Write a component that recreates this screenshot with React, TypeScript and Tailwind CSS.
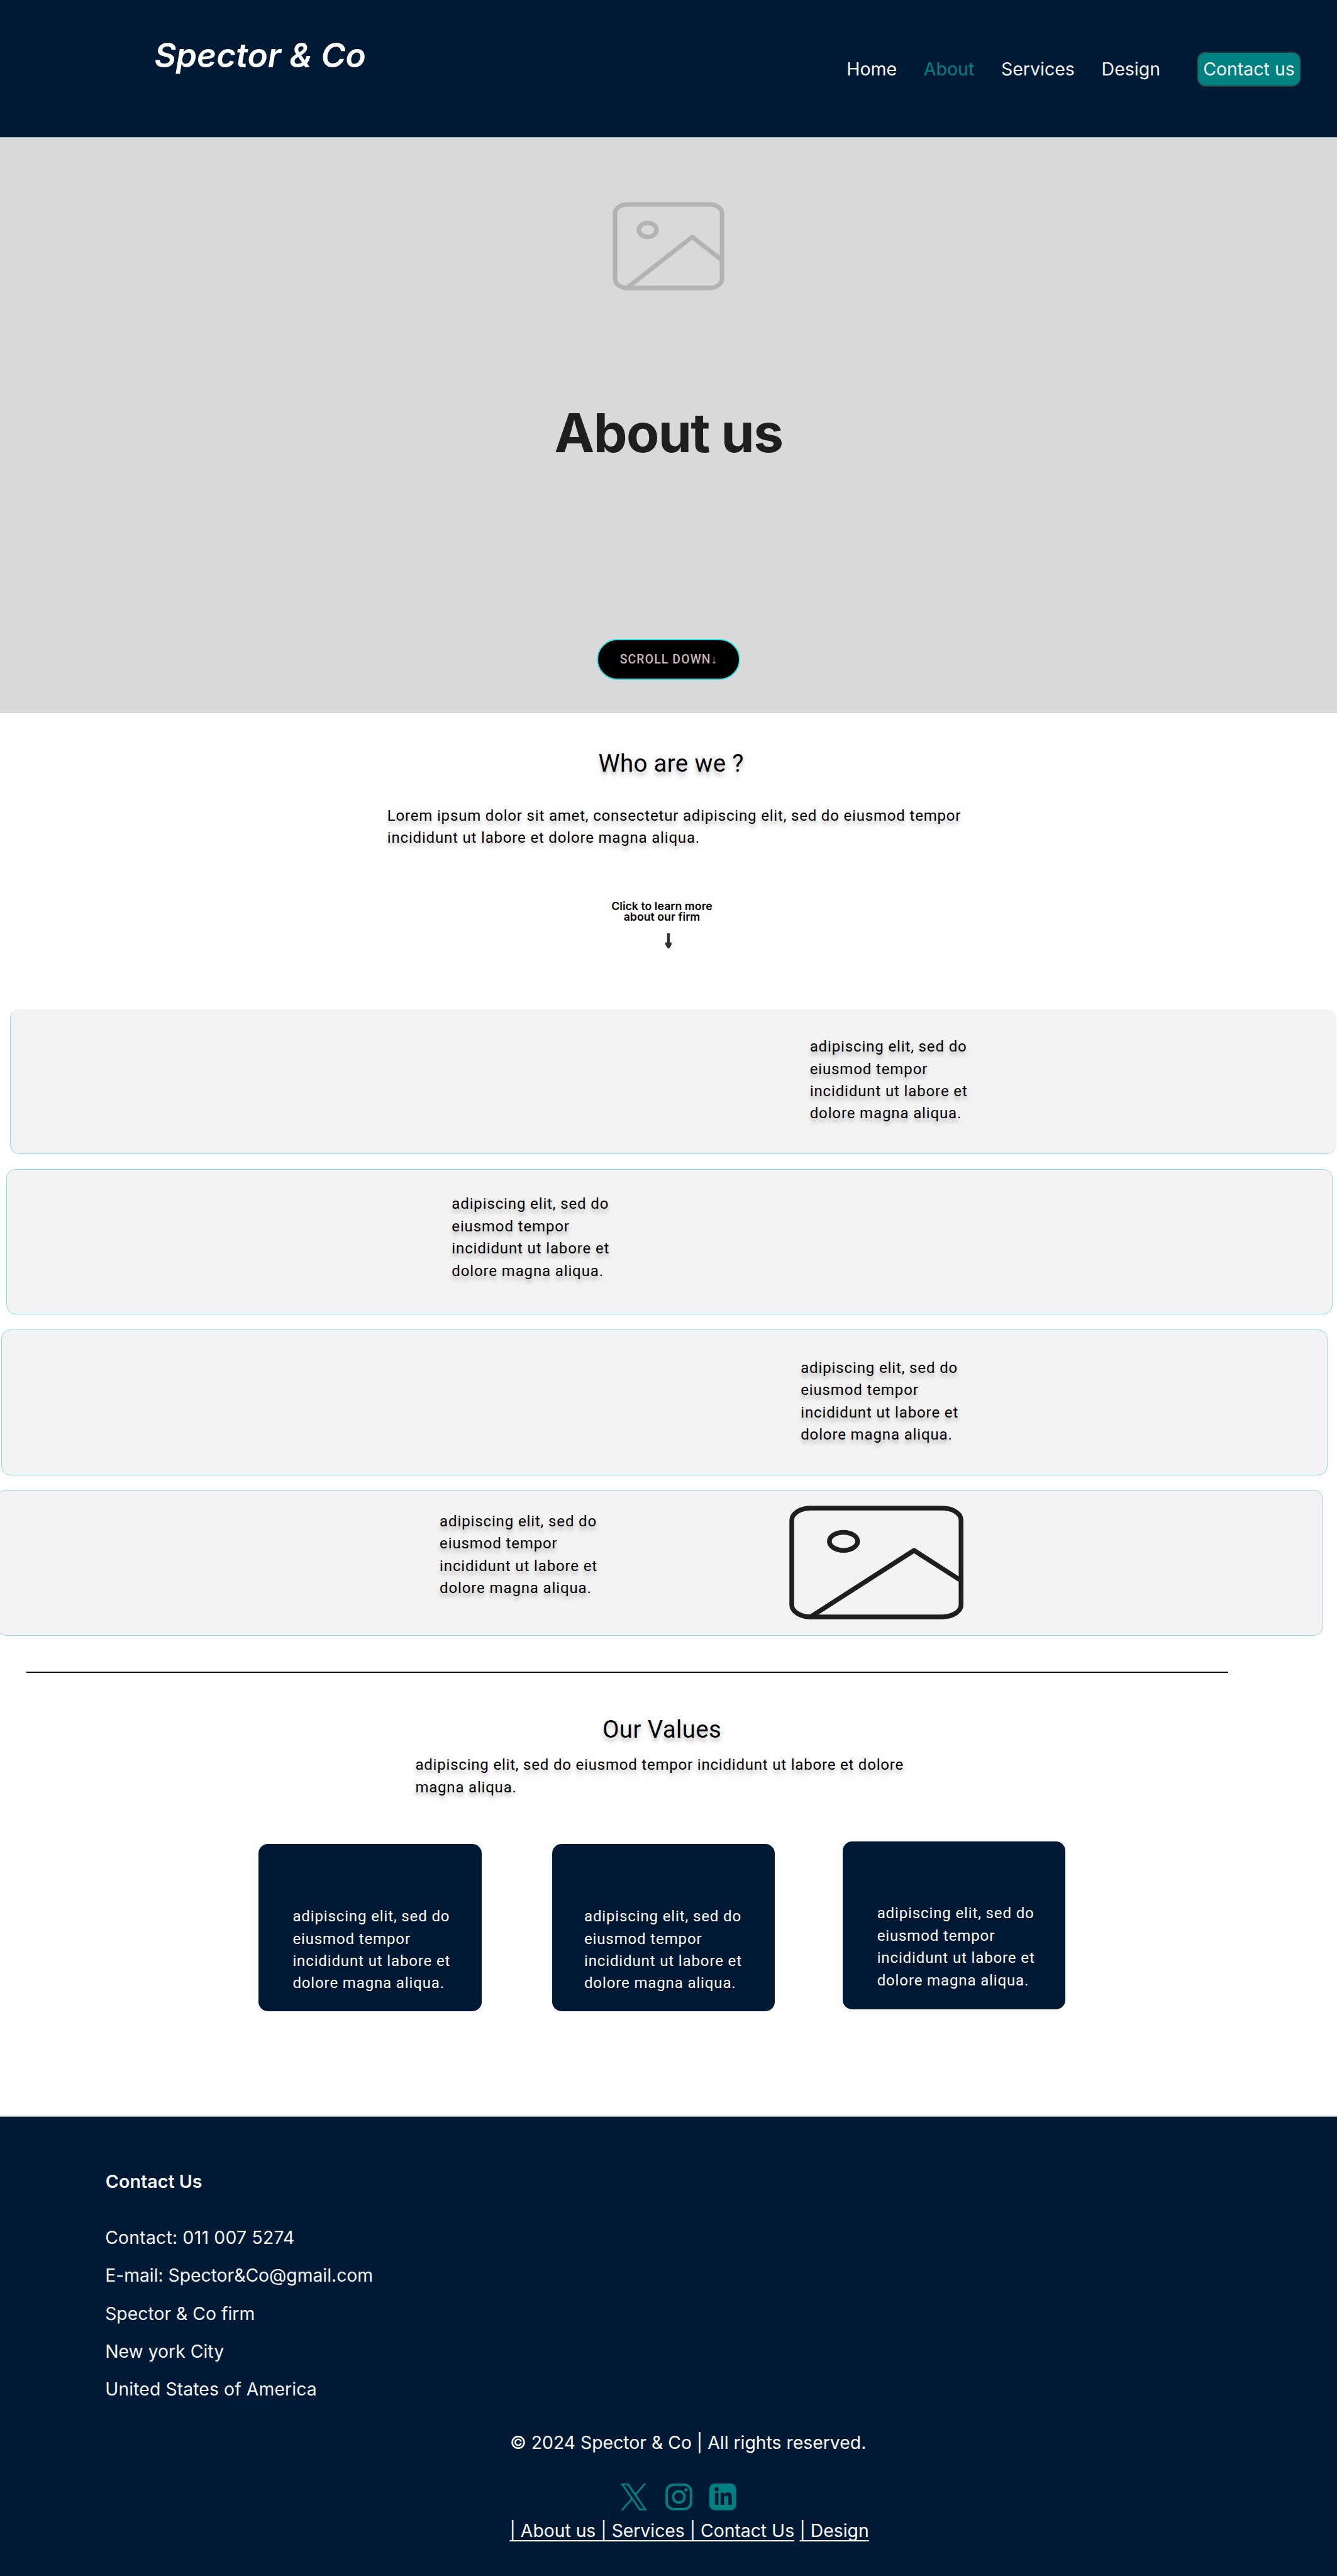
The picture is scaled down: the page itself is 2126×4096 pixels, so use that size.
import type { ReactNode } from "react";

function PictureIcon({ className, strokeWidth }: { className: string; strokeWidth: number }) {
  return (
    <svg
      className={className}
      viewBox="0 0 18 18"
      preserveAspectRatio="none"
      overflow="visible"
      fill="none"
      stroke="currentColor"
      strokeWidth={strokeWidth}
      strokeLinecap="round"
      strokeLinejoin="round"
    >
      <rect x="0" y="0" width="18" height="18" rx="2" ry="2" vectorEffect="non-scaling-stroke" />
      <circle cx="5.5" cy="5.5" r="1.5" vectorEffect="non-scaling-stroke" />
      <polyline points="18 12 13 7 2 18" vectorEffect="non-scaling-stroke" />
    </svg>
  );
}

function Blurb({ className = "" }: { className?: string }) {
  return (
    <p
      className={`shrink-0 whitespace-nowrap font-['Roboto',sans-serif] text-[24px] leading-[35.4px] tracking-[0.87px] [text-shadow:0_6px_6px_rgba(0,0,0,0.25)] ${className}`}
    >
      adipiscing elit, sed do
      <br />
      eiusmod tempor
      <br />
      incididunt ut labore et
      <br />
      dolore magna aliqua.
    </p>
  );
}

function Panel({ className, children }: { className: string; children: ReactNode }) {
  return (
    <div
      className={`flex w-[2109px] shrink-0 items-start rounded-[15px] border-[#8fdadc] bg-[#f3f3f3] text-black ${className}`}
    >
      {children}
    </div>
  );
}

function ValueCard({ className, children }: { className: string; children: ReactNode }) {
  return (
    <div className={`h-[266.2px] w-[354.4px] shrink-0 rounded-[15px] bg-[#001a36] text-white ${className}`}>
      {children}
    </div>
  );
}

function XLogo() {
  return (
    <svg className="h-[42.5px] w-[42px]" viewBox="1 1 22 22" preserveAspectRatio="none" fill="currentColor">
      <path d="M14.095479,10.316482L22.286354,1h-1.940718l-7.115352,8.087682L7.551414,1H1l8.589488,12.231093L1,23h1.940717l7.509372-8.542861L16.448587,23H23L14.095479,10.316482z M11.436522,13.338465l-0.871624-1.218704l-6.924311-9.68815h2.981339l5.58978,7.82155l0.867949,1.218704l7.26506,10.166271h-2.981339L11.436522,13.338465z" />
    </svg>
  );
}

function InstagramLogo() {
  return (
    <svg className="ml-[28.7px] h-[42.5px] w-[42.9px]" viewBox="0 0 50 50" fill="none" stroke="currentColor" strokeWidth="4.5">
      <rect x="2.25" y="2.25" width="45.5" height="45.5" rx="12.5" />
      <circle cx="25" cy="25" r="10.6" />
      <circle cx="38.3" cy="11.7" r="3" fill="currentColor" stroke="none" />
    </svg>
  );
}

function LinkedInLogo() {
  return (
    <svg className="ml-[27.7px] h-[42.5px] w-[42.5px]" viewBox="0 0 50 50">
      <rect width="50" height="50" rx="10" fill="currentColor" />
      <g fill="#001a36">
        <circle cx="13.6" cy="10.7" r="3.9" />
        <path d="M10.3 17.3h6.6v22.7h-6.6z" />
        <path d="M21 17.3h6.3v3.1c1.1-2 3.5-3.8 6.9-3.8 6.4 0 7.8 4.1 7.8 9.6V40h-6.6V27.9c0-2.7-.5-5.4-3.9-5.4-3.5 0-4 2.7-4 5.3V40H21z" />
      </g>
    </svg>
  );
}

export default function App() {
  return (
    <div className="flex h-[4096px] w-[2126px] flex-col overflow-hidden bg-[#fefefe] font-['Inter',sans-serif]">
      <header className="flex h-[217.7px] shrink-0 items-start justify-between bg-[#001a36] pr-[57px] pl-[245.4px] text-[#f5f5f5]">
        <div className="mt-[56.4px] text-[53.15px] leading-[64px] font-semibold text-white italic">Spector &amp; Co</div>
        <nav className="mt-[81.7px] flex h-[56.7px] items-center gap-[42.7px] text-[28.5px] leading-[40px]">
          <a className="text-white">Home</a>
          <a className="text-[#008080]">About</a>
          <a>Services</a>
          <a>Design</a>
          <a className="ml-[15.3px] flex h-[56.7px] w-[166px] items-center justify-center rounded-[14px] border-2 border-[#2c3a3a] bg-[#008080]">
            Contact us
          </a>
        </nav>
      </header>

      <section className="flex h-[915.9px] shrink-0 flex-col items-center border-t border-[#a9b4bd] bg-[#d9d9d9]">
        <PictureIcon className="mt-[106.2px] h-[132.9px] w-[170px] text-[#b3b3b3]" strokeWidth={7.1} />
        <h1 className="mt-[180.5px] text-[85.4px] leading-[100px] font-bold tracking-[-1.6px] text-[#1e1e1e]">About us</h1>
        <button className="mt-[278.2px] flex h-[64.4px] w-[228px] items-center justify-center rounded-full border-2 border-[#2fe4e6] bg-black font-['Roboto',sans-serif] text-[19.3px] leading-[28px] font-medium tracking-[1.2px] text-[#c9b8b8]">
          SCROLL DOWN<span className="font-['Liberation_Sans',sans-serif] font-normal tracking-normal">↓</span>
        </button>
      </section>

      <section className="flex shrink-0 flex-col text-black">
        <h2 className="mt-[56.5px] ml-[951.6px] font-['Roboto',sans-serif] text-[38.4px] leading-[48px] tracking-[0.35px] [text-shadow:0_6px_6px_rgba(0,0,0,0.25)]">
          Who are we ?
        </h2>
        <p className="mt-[41.9px] ml-[615.8px] font-['Roboto',sans-serif] text-[24px] leading-[35.4px] tracking-[0.82px] [text-shadow:0_6px_6px_rgba(0,0,0,0.25)]">
          Lorem ipsum dolor sit amet, consectetur adipiscing elit, sed do eiusmod tempor
          <br />
          incididunt ut labore et dolore magna aliqua.
        </p>
        <p className="mt-[80.8px] mr-[21px] text-center text-[17.75px] leading-[17.8px] font-semibold">
          Click to learn more
          <br />
          about our firm
        </p>
        <svg className="mx-auto mt-[16.8px] h-[23.8px] w-[9.8px]" viewBox="0 0 9.8 23.8" fill="#333">
          <path d="M2.8 0h4.2v14.8l2.8-.4v3.8L6.2 23.8H3.6L0 18.2v-3.8l2.8.4z" />
        </svg>
      </section>

      <section className="mt-[97.3px] flex shrink-0 flex-col items-start gap-[23.6px]">
        <Panel className="ml-[15.9px] h-[230px] border-b border-l">
          <Blurb className="mt-[42.1px] ml-[1270.8px]" />
        </Panel>
        <Panel className="ml-[9.5px] h-[231.5px] border">
          <Blurb className="mt-[37.8px] ml-[707.8px]" />
        </Panel>
        <Panel className="ml-[2.4px] h-[231.9px] border">
          <Blurb className="mt-[43.1px] ml-[1269.8px]" />
        </Panel>
        <Panel className="ml-[-4.7px] h-[231.5px] border">
          <Blurb className="mt-[31.7px] ml-[702.8px] w-[270px]" />
          <PictureIcon className="mt-[27.5px] ml-[289.5px] h-[172.9px] w-[269.2px] text-[#1e1e1e]" strokeWidth={7.5} />
        </Panel>
      </section>

      <hr className="mt-[56.9px] ml-[42px] h-[2px] w-[1910.5px] shrink-0 border-0 bg-[#111]" />

      <section className="flex shrink-0 flex-col text-black">
        <h2 className="mt-[66.7px] ml-[958px] font-['Roboto',sans-serif] text-[38.4px] leading-[48px] tracking-[0.4px] [text-shadow:0_6px_6px_rgba(0,0,0,0.25)]">
          Our Values
        </h2>
        <p className="mt-[14.9px] ml-[660.4px] font-['Roboto',sans-serif] text-[24px] leading-[35.4px] tracking-[0.8px] [text-shadow:0_6px_6px_rgba(0,0,0,0.25)]">
          adipiscing elit, sed do eiusmod tempor incididunt ut labore et dolore
          <br />
          magna aliqua.
        </p>
        <div className="mt-[68.4px] ml-[411.2px] flex items-start">
          <ValueCard className="mt-[3.4px] pt-[98.3px] pl-[54.2px]">
            <Blurb />
          </ValueCard>
          <ValueCard className="mt-[3.4px] ml-[112px] pt-[98.3px] pl-[51.4px]">
            <Blurb />
          </ValueCard>
          <ValueCard className="ml-[108.1px] pt-[96.9px] pl-[54.6px]">
            <Blurb />
          </ValueCard>
        </div>
      </section>

      <footer className="mt-auto flex h-[731.6px] shrink-0 flex-col border-t-2 border-[#a5afb8] bg-[#001a36] text-[28.35px] leading-[40px] text-[#f5f5f5]">
        <h3 className="mt-[83px] ml-[167.8px] text-[28.7px] font-semibold">Contact Us</h3>
        <address className="mt-[38.6px] ml-[167.2px] flex flex-col leading-[60.26px] not-italic">
          <span className="tracking-[0.22px]">Contact: 011 007 5274</span>
          <span className="tracking-[-0.04px]">E-mail: Spector&amp;Co@gmail.com</span>
          <span>Spector &amp; Co firm</span>
          <span>New york City</span>
          <span className="tracking-[0.1px]">United States of America</span>
        </address>
        <p className="mt-[35px] ml-[810.9px] text-white">© 2024 Spector &amp; Co | All rights reserved.</p>
        <div className="mt-[45.1px] ml-[987px] flex text-[#008080]">
          <XLogo />
          <InstagramLogo />
          <LinkedInLogo />
        </div>
        <div className="mt-[12.2px] ml-[810.5px] flex gap-[8.4px] text-[28.3px] text-white">
          <a className="underline decoration-2 underline-offset-[5.4px] [text-decoration-skip-ink:none]">
            | About us | Services | Contact Us
          </a>
          <a className="underline decoration-2 underline-offset-[5.4px] [text-decoration-skip-ink:none]">| Design</a>
        </div>
      </footer>
    </div>
  );
}
